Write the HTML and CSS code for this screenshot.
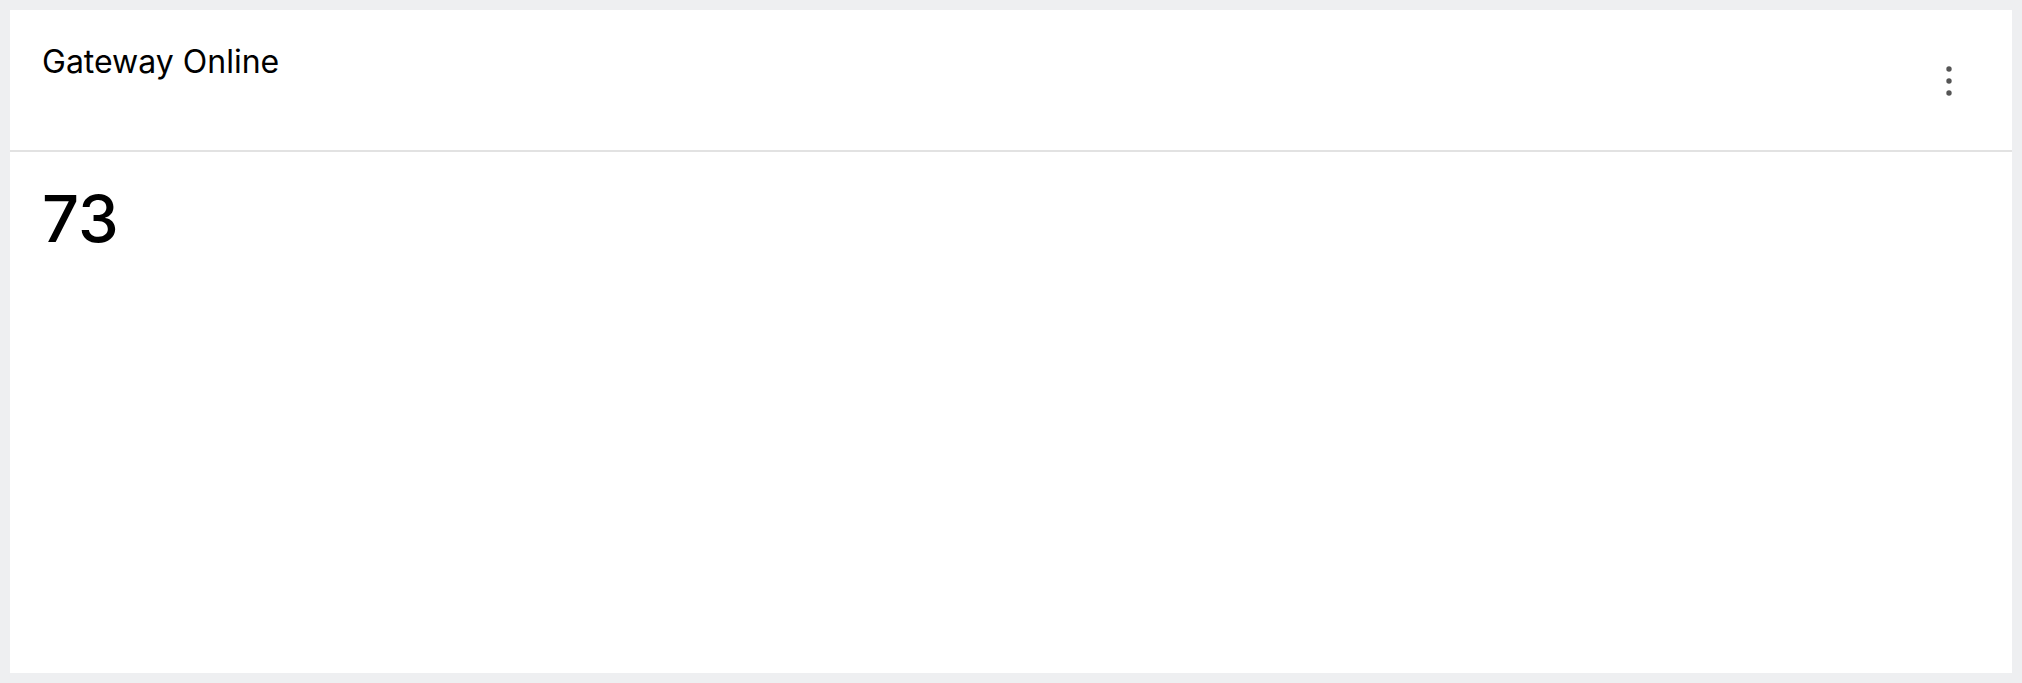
FILE: index.html
```html
<!DOCTYPE html>
<html>
    <head>
        <title>Gateway Online</title>
        <link rel="stylesheet" href="styles.css">
    </head>
    <body>
        <div class="card">
            <div class="cardHeader">
                <h2 class="cardTitle">Gateway Online</h2>
                <button class="menuButton" aria-label="More">
                    <svg width="6" height="30" viewBox="0 0 6 30">
                        <circle cx="3" cy="3" r="2.7"/>
                        <circle cx="3" cy="15" r="2.7"/>
                        <circle cx="3" cy="27" r="2.7"/>
                    </svg>
                </button>
            </div>
            <div class="cardBody">
                <div class="bigValue">73</div>
            </div>
        </div>
    </body>
</html>
```
FILE: styles.css
```css
html, body{
    height:100%;
}
body{
    margin:0;
    padding:10px;
    box-sizing:border-box;
    background-color:#eeeff1;
    font-family:Inter, "Noto Sans", sans-serif;
    color:#000;
}
.card{
    background-color:#fff;
    height:100%;
    display:flex;
    flex-direction:column;
}
.cardHeader{
    height:142px;
    box-sizing:border-box;
    padding:33px 43px 0 32px;
    display:flex;
    justify-content:space-between;
    align-items:flex-start;
    border-bottom:2px solid #e2e2e2;
}
.cardTitle{
    margin:0;
    font-size:32px;
    font-weight:400;
    line-height:1.21;
}
.menuButton{
    width:40px;
    height:40px;
    margin-top:18px;
    padding:0;
    border:none;
    background:none;
    display:flex;
    align-items:center;
    justify-content:center;
    fill:#555;
}
.cardBody{
    padding:28px 32px;
}
.bigValue{
    font-size:65px;
    font-weight:500;
    line-height:1.21;
}
```
